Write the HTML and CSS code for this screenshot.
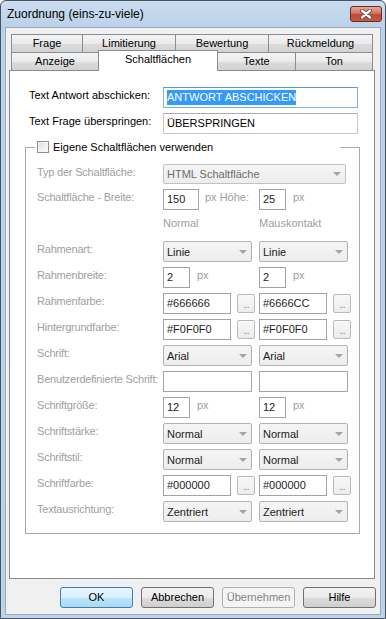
FILE: index.html
```html
<!DOCTYPE html>
<html>
<head>
<title>Zuordnung (eins-zu-viele)</title>
<link rel="stylesheet" href="styles.css">
</head>
<body>
<div class="window">
  <div class="titlebar">
    <span class="title">Zuordnung (eins-zu-viele)</span>
    <div class="close">
      <svg width="16" height="10" viewBox="0 0 16 10">
        <path d="M4 1.5 L12 8.5 M12 1.5 L4 8.5" stroke="#5a3b3b" stroke-width="4" stroke-linecap="round"/>
        <path d="M4 1.5 L12 8.5 M12 1.5 L4 8.5" stroke="#ffffff" stroke-width="2.4" stroke-linecap="round"/>
      </svg>
    </div>
  </div>

  <div class="client">
    <div class="tabrow">
      <div class="tab t-frage">Frage</div>
      <div class="tab t-limit">Limitierung</div>
      <div class="tab t-bewert">Bewertung</div>
      <div class="tab t-rueck">Rückmeldung</div>
    </div>
    <div class="tabrow">
      <div class="tab t-anzeige">Anzeige</div>
      <div class="tab t-schalt active">Schaltflächen</div>
      <div class="tab t-texte">Texte</div>
      <div class="tab t-ton">Ton</div>
    </div>

    <div class="panel">
      <div class="toprow">
        <span class="toplbl">Text Antwort abschicken:</span>
        <div class="edit big focus"><span class="sel">ANTWORT ABSCHICKEN</span></div>
      </div>
      <div class="toprow">
        <span class="toplbl">Text Frage überspringen:</span>
        <div class="edit big">ÜBERSPRINGEN</div>
      </div>

      <fieldset class="group">
        <legend><span class="check"></span>Eigene Schaltflächen verwenden</legend>

        <div class="row typ">
          <span class="lbl">Typ der Schaltfläche:</span>
          <div class="combo wide dim"><span>HTML Schaltfläche</span><i class="arrow"></i></div>
        </div>
        <div class="row">
          <span class="lbl">Schaltfläche - Breite:</span>
          <div class="col"><div class="edit w36">150</div><span class="unit first">px Höhe:</span></div>
          <div class="col"><div class="edit w27">25</div><span class="unit">px</span></div>
        </div>
        <div class="row">
          <span class="lbl"></span>
          <div class="col"><span class="head">Normal</span></div>
          <div class="col"><span class="head">Mauskontakt</span></div>
        </div>
        <div class="row">
          <span class="lbl">Rahmenart:</span>
          <div class="col"><div class="combo"><span>Linie</span><i class="arrow"></i></div></div>
          <div class="col"><div class="combo"><span>Linie</span><i class="arrow"></i></div></div>
        </div>
        <div class="row">
          <span class="lbl">Rahmenbreite:</span>
          <div class="col"><div class="edit w27">2</div><span class="unit">px</span></div>
          <div class="col"><div class="edit w27">2</div><span class="unit">px</span></div>
        </div>
        <div class="row">
          <span class="lbl">Rahmenfarbe:</span>
          <div class="col"><div class="edit w68">#666666</div><div class="dots">...</div></div>
          <div class="col"><div class="edit w68">#6666CC</div><div class="dots">...</div></div>
        </div>
        <div class="row">
          <span class="lbl">Hintergrundfarbe:</span>
          <div class="col"><div class="edit w68">#F0F0F0</div><div class="dots">...</div></div>
          <div class="col"><div class="edit w68">#F0F0F0</div><div class="dots">...</div></div>
        </div>
        <div class="row">
          <span class="lbl">Schrift:</span>
          <div class="col"><div class="combo"><span>Arial</span><i class="arrow"></i></div></div>
          <div class="col"><div class="combo"><span>Arial</span><i class="arrow"></i></div></div>
        </div>
        <div class="row">
          <span class="lbl">Benutzerdefinierte Schrift:</span>
          <div class="col"><div class="edit w89"></div></div>
          <div class="col"><div class="edit w89"></div></div>
        </div>
        <div class="row">
          <span class="lbl">Schriftgröße:</span>
          <div class="col"><div class="edit w27">12</div><span class="unit">px</span></div>
          <div class="col"><div class="edit w27">12</div><span class="unit">px</span></div>
        </div>
        <div class="row">
          <span class="lbl">Schriftstärke:</span>
          <div class="col"><div class="combo"><span>Normal</span><i class="arrow"></i></div></div>
          <div class="col"><div class="combo"><span>Normal</span><i class="arrow"></i></div></div>
        </div>
        <div class="row">
          <span class="lbl">Schriftstil:</span>
          <div class="col"><div class="combo"><span>Normal</span><i class="arrow"></i></div></div>
          <div class="col"><div class="combo"><span>Normal</span><i class="arrow"></i></div></div>
        </div>
        <div class="row">
          <span class="lbl">Schriftfarbe:</span>
          <div class="col"><div class="edit w68">#000000</div><div class="dots">...</div></div>
          <div class="col"><div class="edit w68">#000000</div><div class="dots">...</div></div>
        </div>
        <div class="row last">
          <span class="lbl">Textausrichtung:</span>
          <div class="col"><div class="combo"><span>Zentriert</span><i class="arrow"></i></div></div>
          <div class="col"><div class="combo"><span>Zentriert</span><i class="arrow"></i></div></div>
        </div>
      </fieldset>
    </div>

    <div class="buttons">
      <div class="btn default">OK</div>
      <div class="btn">Abbrechen</div>
      <div class="btn disabled">Übernehmen</div>
      <div class="btn">Hilfe</div>
    </div>
  </div>
</div>
</body>
</html>
```

FILE: styles.css
```css
*{
  box-sizing: border-box;
}

html, body{
  margin: 0;
  padding: 0;
  background-color: #ffffff;
}

body{
  font-family: "Liberation Sans", Arial, sans-serif;
  font-size: 11px;
  color: #000000;
}

/* window frame */
.window{
  width: 386px;
  height: 619px;
  display: flex;
  flex-direction: column;
  border: 1px solid #4a5260;
  border-radius: 6px 6px 0 0;
  background: linear-gradient(#cadcf0, #bcd1e9 26px, #bed3ea);
  padding: 0 4px 3px 4px;
}

.titlebar{
  height: 26px;
  display: flex;
  align-items: center;
  padding-left: 2px;
}
.title{
  font-size: 12px;
  color: #000000;
}
.close{
  margin-left: auto;
  margin-right: -1px;
  width: 32px;
  height: 16px;
  border: 1px solid #6b2a24;
  border-radius: 3px;
  background: linear-gradient(#e8a89c, #d2735f 45%, #c04a34 55%, #c65b45);
  display: flex;
  align-items: center;
  justify-content: center;
}

.client{
  flex: 1;
  background-color: #f0f0f0;
  border: 1px solid #96abc6;
  display: flex;
  flex-direction: column;
  padding: 6px 5px 0 3px;
}

/* tabs */
.tabrow{
  display: flex;
  margin: 0 2px;
  height: 18px;
}
.tab{
  height: 18px;
  border: 1px solid #898c95;
  border-bottom: none;
  background: linear-gradient(#f3f3f3, #ebebeb 50%, #dddddd 50%, #d2d2d2);
  text-align: center;
  line-height: 17px;
  margin-left: -1px;
}
.tab:first-child{
  margin-left: 0;
}
.t-frage{ width: 72px; }
.t-limit{ width: 94px; }
.t-bewert{ width: 94px; }
.t-rueck{ width: 105px; }
.t-anzeige{ width: 88px; }
.t-schalt{ width: 120px; }
.t-texte{ width: 79px; }
.t-ton{ width: 78px; }

.tab.active{
  position: relative;
  z-index: 1;
  height: 21px;
  margin-top: -2px;
  background: #ffffff;
}

.panel{
  height: 509px;
  border: 1px solid #898c95;
  background-color: #ffffff;
  padding: 16px 14px 0 15px;
}

/* fields */
.toprow{
  display: flex;
  height: 21px;
  margin-bottom: 5px;
  padding-left: 4px;
}
.toplbl{
  width: 134px;
  line-height: 13px;
  padding-top: 2px;
}

.edit{
  height: 21px;
  border: 1px solid #a3a3a3;
  background-color: #ffffff;
  padding: 0 3px;
  line-height: 19px;
  color: #1e1e1e;
  white-space: nowrap;
  overflow: hidden;
}
.edit.big{
  width: 195px;
  border-color: #c5c8cf;
  border-top-color: #abadb3;
  color: #000000;
}
.edit.focus{
  border-color: #7fb2e0;
  border-top-color: #5b97d0;
}
.sel{
  background-color: #3399ff;
  color: #ffffff;
  padding: 1px 0 2px 0;
}
.w27{ width: 27px; }
.w36{ width: 36px; }
.w68{ width: 68px; }
.w89{ width: 89px; }

.group{
  margin: 7px 0 0 0;
  padding: 10px 0 11px 11px;
  border: 1px solid #a9a9a9;
  min-width: 0;
}
.group legend{
  width: 305px;
  height: 13px;
  line-height: 13px;
  margin-left: -2px;
  padding: 0 0 0 2px;
  background-color: #ffffff;
}
.check{
  display: inline-block;
  width: 12px;
  height: 12px;
  border: 1px solid #8f8f8f;
  background: linear-gradient(135deg, #dcdcdc, #ffffff);
  box-shadow: inset 0 0 0 1px #f4f4f4;
  vertical-align: -2px;
  margin-right: 4px;
}

.row{
  display: flex;
  align-items: flex-start;
  height: 21px;
  margin-bottom: 5px;
}
.row.typ{
  height: 20px;
}
.row.last{
  margin-bottom: 0;
}
.lbl{
  width: 126px;
  flex-shrink: 0;
  color: #a0a0a0;
  line-height: 13px;
  padding-top: 2px;
  white-space: nowrap;
  letter-spacing: -0.2px;
}
.col{
  width: 96px;
  display: flex;
  align-items: center;
  flex-shrink: 0;
}
.head{
  color: #a0a0a0;
  line-height: 13px;
  padding-top: 2px;
  align-self: flex-start;
}
.unit{
  color: #a0a0a0;
  margin-left: 7px;
  line-height: 13px;
  align-self: flex-start;
  padding-top: 2px;
}
.unit.first{
  margin-left: 6px;
}

.combo{
  width: 89px;
  height: 21px;
  border: 1px solid #b3b3b3;
  border-radius: 2px;
  background: linear-gradient(#f5f5f5, #ededed);
  display: flex;
  align-items: center;
  justify-content: space-between;
  padding: 0 4px 0 3px;
  color: #222222;
}
.combo.wide{
  width: 183px;
  height: 20px;
  border-color: #c2c2c2;
}
.combo.dim{
  color: #6d6d6d;
}
.arrow{
  width: 0;
  height: 0;
  border-left: 4px solid transparent;
  border-right: 4px solid transparent;
  border-top: 4px solid #a4a4a4;
}

.dots{
  width: 18px;
  height: 19px;
  margin-left: 6px;
  border: 1px solid #b9b9b9;
  border-radius: 2px;
  background: linear-gradient(#f8f8f8, #ececec);
  color: #9a9a9a;
  font-size: 10px;
  text-align: center;
  line-height: 20px;
  letter-spacing: -1px;
}

/* dialog buttons */
.buttons{
  display: flex;
  justify-content: flex-end;
  gap: 8px;
  margin-top: 8px;
  margin-right: -1px;
}
.btn{
  width: 73px;
  height: 21px;
  border: 1px solid #707070;
  border-radius: 3px;
  background: linear-gradient(#f2f2f2, #ebebeb 50%, #dddddd 50%, #cfcfcf);
  text-align: center;
  line-height: 19px;
}
.btn.default{
  border-color: #3c7fb1;
  background: linear-gradient(#eaf6fd, #d9f0fc 50%, #bee6fd 50%, #a7d9f5);
}
.btn.disabled{
  border-color: #adb2b5;
  background: #f4f4f4;
  color: #838383;
}
```
